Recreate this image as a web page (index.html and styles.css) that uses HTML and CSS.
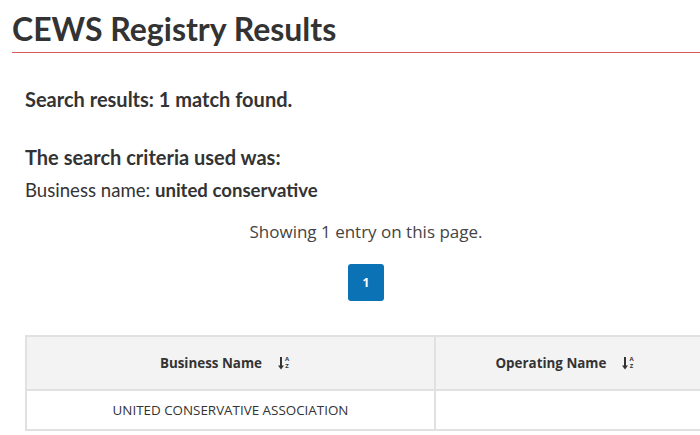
FILE: index.html
```html
<!DOCTYPE html>
<html lang="en">
<head>
  <meta charset="UTF-8">
  <meta name="viewport" content="width=device-width, initial-scale=1.0">
  <title>CEWS Registry Results</title>
  <link rel="stylesheet" href="styles.css">
</head>
<body>
  <div class="page">
    <h1 class="page-title">CEWS Registry Results</h1>

    <div class="results">
      <h2 class="results-count">Search results: 1 match found.</h2>

      <h2 class="criteria-title">The search criteria used was:</h2>
      <p class="criteria">Business name: <strong>united conservative</strong></p>

      <p class="showing">Showing 1 entry on this page.</p>

      <div class="pagination">
        <a class="page-btn active" href="#">1</a>
      </div>

      <table class="registry-table">
        <colgroup>
          <col class="col-business">
          <col class="col-operating">
        </colgroup>
        <thead>
          <tr>
            <th>
              <span class="th-inner">Business Name
                <span class="sort-icon">
                  <svg width="6" height="14" viewBox="0 0 6 14">
                    <path d="M3 1v11" stroke="#333" stroke-width="2" fill="none"/>
                    <path d="M0 9.5h6L3 13.5z" fill="#333"/>
                  </svg>
                  <span class="sort-letters"><span>A</span><span>Z</span></span>
                </span>
              </span>
            </th>
            <th>
              <span class="th-inner">Operating Name
                <span class="sort-icon">
                  <svg width="6" height="14" viewBox="0 0 6 14">
                    <path d="M3 1v11" stroke="#333" stroke-width="2" fill="none"/>
                    <path d="M0 9.5h6L3 13.5z" fill="#333"/>
                  </svg>
                  <span class="sort-letters"><span>A</span><span>Z</span></span>
                </span>
              </span>
            </th>
          </tr>
        </thead>
        <tbody>
          <tr>
            <td>UNITED CONSERVATIVE ASSOCIATION</td>
            <td></td>
          </tr>
        </tbody>
      </table>
    </div>
  </div>
</body>
</html>
```

FILE: styles.css
```css
html {
  overflow: hidden;
}

body {
  margin: 0;
  font-family: Lato, "Open Sans", Arial, sans-serif;
  color: #333;
  background-color: #fff;
}

.page {
  padding: 0 0 0 12px;
}

.page-title {
  margin: 0;
  padding: 12px 0 6px;
  font-size: 32px;
  font-weight: 700;
  line-height: 34px;
  color: #333;
  border-bottom: 1px solid #d9575e;
}

/* content column is wider than the window, so it runs off the right edge */
.results {
  width: 682px;
  padding: 0 0 0 13px;
}

.results-count,
.criteria-title {
  margin: 0;
  font-size: 20px;
  font-weight: 700;
  line-height: 24px;
}

.results-count {
  padding-top: 34px;
}

.criteria-title {
  padding-top: 34px;
}

.criteria {
  margin: 10px 0 0;
  font-size: 18.6px;
  line-height: 22px;
}

.criteria strong {
  font-weight: 700;
}

.showing {
  margin: 20px 0 0;
  font-family: "Open Sans", Arial, sans-serif;
  font-size: 17px;
  line-height: 22px;
  color: #444;
  text-align: center;
}

.pagination {
  display: flex;
  justify-content: center;
  margin-top: 21px;
}

.page-btn {
  display: flex;
  align-items: center;
  justify-content: center;
  width: 36px;
  height: 37px;
  border-radius: 3px;
  font-family: "Open Sans", Arial, sans-serif;
  font-size: 12px;
  font-weight: 700;
  color: #fff;
  text-decoration: none;
}

.page-btn.active {
  background-color: #0b72b6;
}

.registry-table {
  width: 100%;
  margin-top: 34px;
  border-collapse: collapse;
  table-layout: fixed;
  font-family: "Open Sans", Arial, sans-serif;
  color: #333;
}

.col-business {
  width: 409px;
}

.registry-table th,
.registry-table td {
  border: 2px solid #e1e1e1;
  text-align: center;
}

.registry-table th {
  height: 52px;
  padding: 0 18px 0 6px;
  background-color: #f3f3f3;
  font-size: 13.4px;
  font-weight: 700;
}

.registry-table td {
  height: 38px;
  padding: 0;
  font-size: 13.4px;
  font-weight: 400;
}

.th-inner {
  display: inline-flex;
  align-items: center;
}

.sort-icon {
  display: inline-flex;
  align-items: center;
  margin-left: 16px;
}

.sort-letters {
  display: flex;
  flex-direction: column;
  margin-left: 1px;
  font-size: 6px;
  font-weight: 700;
  line-height: 7px;
}
```
